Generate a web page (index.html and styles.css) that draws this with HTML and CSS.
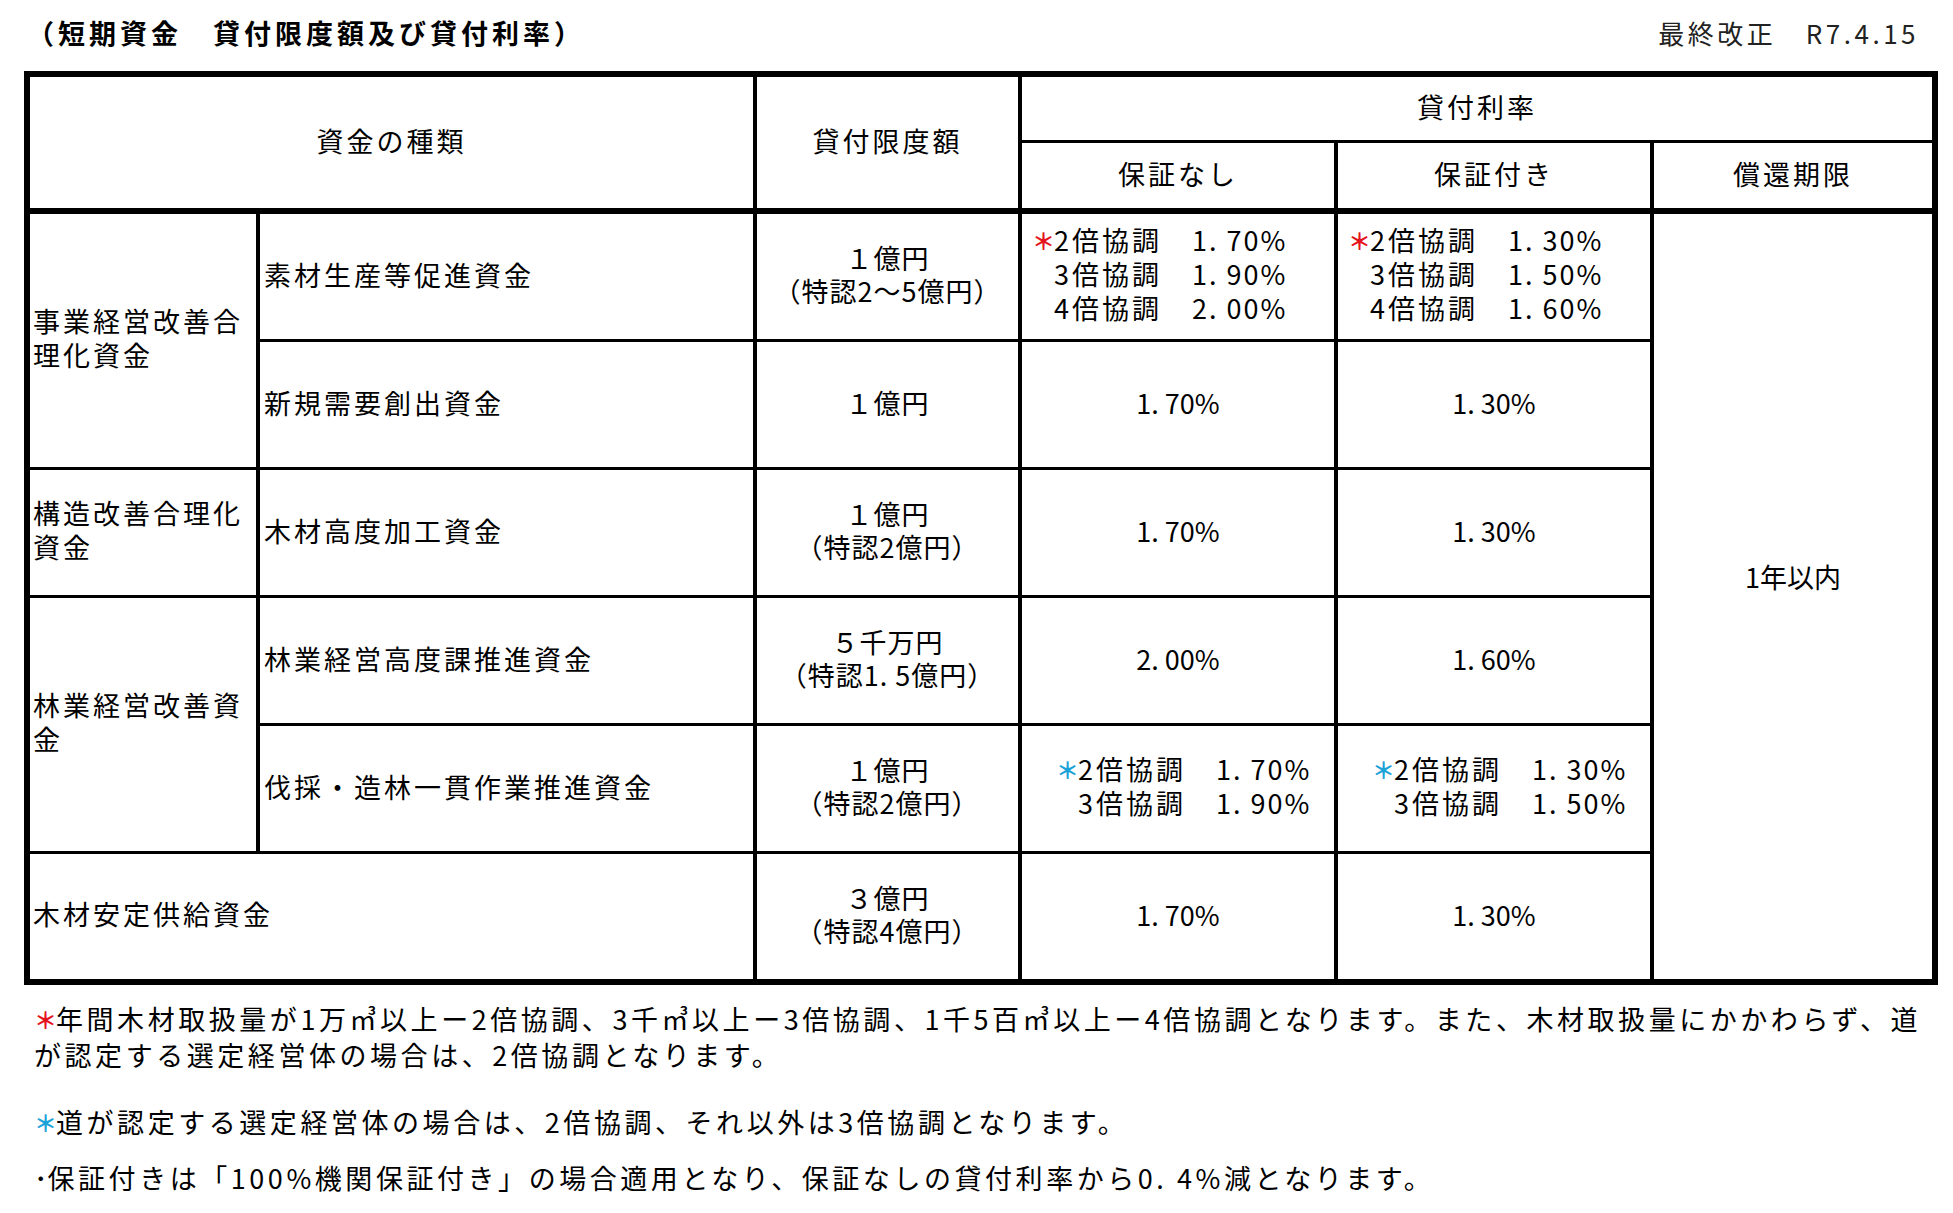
FILE: index.html
```html
<!DOCTYPE html>
<html lang="ja">
<head>
<meta charset="utf-8">
<title>短期資金 貸付限度額及び貸付利率</title>
<link rel="stylesheet" href="styles.css">
</head>
<body>
<div class="page">
  <div class="topbar">
    <div class="title">（短期資金　貸付限度額及び貸付利率）</div>
    <div class="revised">最終改正　R7.4.15</div>
  </div>

  <div class="grid">
    <div class="cell hd kind hb">資金の種類</div>
    <div class="cell hd limit hb">貸付限度額</div>
    <div class="cell hd rate">貸付利率</div>
    <div class="cell hd hb">保証なし</div>
    <div class="cell hd hb">保証付き</div>
    <div class="cell hd hb">償還期限</div>

    <div class="cell cat span2">事業経営改善合理化資金</div>
    <div class="cell name">素材生産等促進資金</div>
    <div class="cell amt"><div class="amt-lines"><div class="al">１億円</div><div class="al">（特認2～5億円）</div></div></div>
    <div class="cell tiers"><div class="tier-list">
      <div class="tl"><span class="ast red">＊</span>2倍協調　<span class="pct">1. 70%</span></div>
      <div class="tl"><span class="ast"></span>3倍協調　<span class="pct">1. 90%</span></div>
      <div class="tl"><span class="ast"></span>4倍協調　<span class="pct">2. 00%</span></div>
    </div></div>
    <div class="cell tiers"><div class="tier-list">
      <div class="tl"><span class="ast red">＊</span>2倍協調　<span class="pct">1. 30%</span></div>
      <div class="tl"><span class="ast"></span>3倍協調　<span class="pct">1. 50%</span></div>
      <div class="tl"><span class="ast"></span>4倍協調　<span class="pct">1. 60%</span></div>
    </div></div>
    <div class="cell term">1年以内</div>

    <div class="cell name">新規需要創出資金</div>
    <div class="cell amt"><div class="amt-lines"><div class="al">１億円</div></div></div>
    <div class="cell val">1. 70%</div>
    <div class="cell val">1. 30%</div>

    <div class="cell cat">構造改善合理化資金</div>
    <div class="cell name">木材高度加工資金</div>
    <div class="cell amt"><div class="amt-lines"><div class="al">１億円</div><div class="al">（特認2億円）</div></div></div>
    <div class="cell val">1. 70%</div>
    <div class="cell val">1. 30%</div>

    <div class="cell cat span2">林業経営改善資金</div>
    <div class="cell name">林業経営高度課推進資金</div>
    <div class="cell amt"><div class="amt-lines"><div class="al">５千万円</div><div class="al">（特認1. 5億円）</div></div></div>
    <div class="cell val">2. 00%</div>
    <div class="cell val">1. 60%</div>

    <div class="cell name">伐採・造林一貫作業推進資金</div>
    <div class="cell amt"><div class="amt-lines"><div class="al">１億円</div><div class="al">（特認2億円）</div></div></div>
    <div class="cell tiers wide"><div class="tier-list">
      <div class="tl"><span class="ast blue">＊</span>2倍協調　<span class="pct">1. 70%</span></div>
      <div class="tl"><span class="ast"></span>3倍協調　<span class="pct">1. 90%</span></div>
    </div></div>
    <div class="cell tiers wide"><div class="tier-list">
      <div class="tl"><span class="ast blue">＊</span>2倍協調　<span class="pct">1. 30%</span></div>
      <div class="tl"><span class="ast"></span>3倍協調　<span class="pct">1. 50%</span></div>
    </div></div>

    <div class="cell cat both">木材安定供給資金</div>
    <div class="cell amt"><div class="amt-lines"><div class="al">３億円</div><div class="al">（特認4億円）</div></div></div>
    <div class="cell val">1. 70%</div>
    <div class="cell val">1. 30%</div>
  </div>

  <div class="notes">
    <p class="note first"><span class="ast red">＊</span>年間木材取扱量が1万㎥以上ー2倍協調、3千㎥以上ー3倍協調、1千5百㎥以上ー4倍協調となります。また、木材取扱量にかかわらず、道<br>が認定する選定経営体の場合は、2倍協調となります。</p>
    <p class="note second"><span class="ast blue">＊</span>道が認定する選定経営体の場合は、2倍協調、それ以外は3倍協調となります。</p>
    <p class="note third"><span class="dot">･</span>保証付きは「100%機関保証付き」の場合適用となり、保証なしの貸付利率から0. 4%減となります。</p>
  </div>
</div>
</body>
</html>
```

FILE: styles.css
```css
html {
  overflow: hidden;
}

body {
  margin: 0;
  background: #fff;
  color: #000;
  font-family: "Noto Sans CJK JP", "Noto Sans", sans-serif;
}

.page {
  padding-left: 24px;
  width: 1914px;
}

.topbar {
  display: flex;
  justify-content: space-between;
  align-items: center;
  height: 40px;
  margin: 12px 0 19px;
}

.title {
  font-size: 27px;
  font-weight: 700;
  letter-spacing: 4px;
  margin-left: 3px;
}

.revised {
  font-size: 26px;
  letter-spacing: 3.5px;
  color: #222;
  margin-right: 19px;
}

.grid {
  display: grid;
  grid-template-columns: 226px 493px 261px 312px 312px 278px;
  grid-template-rows: 63px 68px repeat(6, 125px);
  gap: 3px 4px;
  padding: 6px;
  background: #000;
  width: max-content;
  font-size: 27px;
  letter-spacing: 3px;
}

.cell {
  background: #fff;
  display: flex;
  align-items: center;
  min-width: 0;
  padding-bottom: 5px;
}

.hd {
  justify-content: center;
}

.hb {
  margin-bottom: 3px;
}

.kind {
  grid-column: 1 / 3;
  grid-row: 1 / 3;
}

.limit {
  grid-column: 3;
  grid-row: 1 / 3;
}

.rate {
  grid-column: 4 / 7;
  grid-row: 1;
}

.cat {
  grid-column: 1;
  padding-left: 3px;
  line-height: 34px;
}

.span2 {
  grid-row: span 2;
}

.both {
  grid-column: 1 / 3;
}

.name {
  padding-left: 4px;
}

.amt {
  justify-content: center;
  text-align: center;
  letter-spacing: 1px;
}

.al {
  height: 33px;
  line-height: 33px;
  white-space: nowrap;
}

.val {
  justify-content: center;
  letter-spacing: 0;
}

.tiers {
  padding-left: 10px;
  line-height: 34px;
}

.tiers.wide {
  padding-left: 34px;
}

.tl {
  white-space: nowrap;
}

.pct {
  letter-spacing: 2px;
}

.ast {
  display: inline-block;
  width: 22px;
  font-size: 23px;
  font-weight: 700;
  letter-spacing: 0;
  text-align: center;
  vertical-align: top;
}

.red {
  color: #e5141c;
}

.blue {
  color: #1ba3d8;
}

.term {
  grid-column: 6;
  grid-row: 3 / 9;
  justify-content: center;
  padding-bottom: 41px;
  letter-spacing: 0;
}

.notes {
  padding-left: 10px;
  margin-top: 16px;
  font-size: 27px;
  letter-spacing: 3.55px;
  line-height: 36px;
}

.note {
  margin: 0;
  white-space: nowrap;
}

.note.second {
  margin-top: 31px;
}

.note.third {
  margin-top: 20px;
}

.dot {
  letter-spacing: 0;
}
```
